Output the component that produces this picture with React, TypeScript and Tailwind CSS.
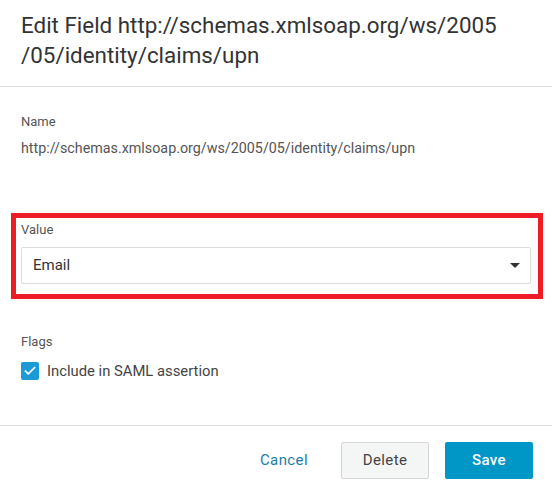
import { Check } from "lucide-react";

export default function App() {
  return (
    <div className="w-[552px] h-[493px] bg-white flex flex-col font-['Roboto',sans-serif] text-[#555]">
      {/* Header */}
      <div className="px-[21px] pt-[10px] pb-[16px] border-b border-[#e3e3e3]">
        <h1 className="text-[22.4px] leading-[30px] text-[#333] font-normal whitespace-nowrap">
          Edit Field http://schemas.xmlsoap.org/ws/2005
          <br />
          /05/identity/claims/upn
        </h1>
      </div>

      {/* Body */}
      <div className="flex-1 px-[21px] pt-[27px]">
        <div className="text-[13px] leading-[16px]">Name</div>
        <div className="mt-[9px] text-[14.3px] leading-[18px]">
          http://schemas.xmlsoap.org/ws/2005/05/identity/claims/upn
        </div>

        <div className="mt-[56px] -ml-[10px] -mr-[12px] border-[5px] border-[#ee1c25] pl-[5px] pr-[7px] pt-[4px] pb-[10px]">
          <div className="text-[13px] leading-[16px]">Value</div>
          <div className="mt-[9px] h-[37px] border border-[#dcdcdc] rounded-[2px] flex items-center justify-between pl-[11px] pr-[10px]">
            <span className="text-[15px] text-[#333]">Email</span>
            <svg width="10" height="5" viewBox="0 0 10 5">
              <path d="M0 0h10L5 5z" fill="#333" />
            </svg>
          </div>
        </div>

        <div className="mt-[35px] text-[13px] leading-[16px]">Flags</div>
        <label className="mt-[10px] flex items-center gap-[8px]">
          <span className="w-[18px] h-[18px] rounded-[2px] bg-[#1a9ad6] flex items-center justify-center">
            <Check className="w-[14px] h-[14px] text-white" strokeWidth={3} />
          </span>
          <span className="text-[14.8px] text-[#444]">Include in SAML assertion</span>
        </label>
      </div>

      {/* Footer */}
      <div className="border-t border-[#e3e3e3] pt-[16px] pb-[14px] px-[19px] flex items-center justify-end">
        <button className="text-[15px] text-[#1a7ea6] tracking-[0.4px] px-[20px] h-[37px]">Cancel</button>
        <button className="ml-[13px] w-[88px] h-[37px] bg-[#f4f5f5] border border-[#d6d6d6] rounded-[2px] text-[15px] text-[#444] tracking-[0.4px]">
          Delete
        </button>
        <button className="ml-[16px] w-[88px] h-[37px] bg-[#0096c6] rounded-[2px] text-[15px] text-white font-medium tracking-[0.4px]">
          Save
        </button>
      </div>
    </div>
  );
}
